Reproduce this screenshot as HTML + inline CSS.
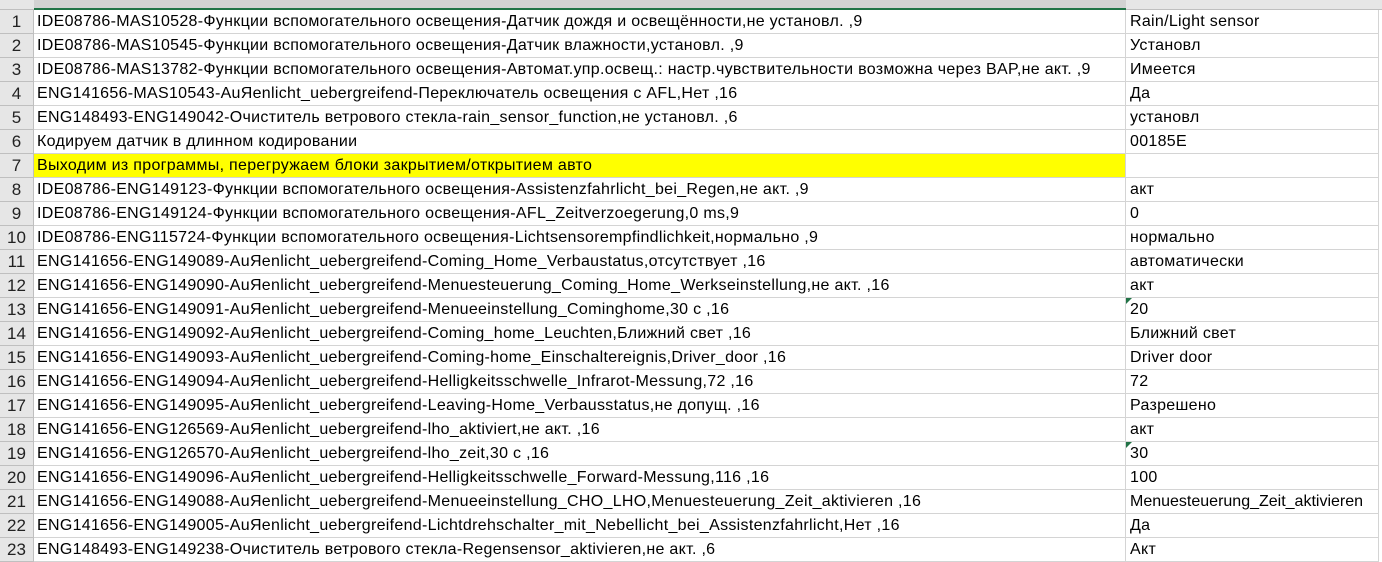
<!DOCTYPE html>
<html><head><meta charset="utf-8"><style>
body{margin:0;width:1382px;height:562px;overflow:hidden;background:#fff;font-family:"Liberation Sans",sans-serif;font-size:16px;letter-spacing:0.3px;color:#000}
.hdr{position:absolute;left:0;top:0;width:1382px;height:9px;background:#e6e6e6;border-bottom:1px solid #bfbfbf}
.hdrA{position:absolute;left:34px;top:0;width:1092px;height:8px;background:#d2d2d2;border-bottom:2px solid #217346}
.r{position:absolute;left:0;width:1382px;height:24px}
.n{position:absolute;left:0;top:0;width:33px;height:23px;background:#e6e6e6;border-right:1px solid #bfbfbf;border-bottom:1px solid #bfbfbf;text-align:center;line-height:24px;color:#222;font-size:17px;letter-spacing:0}
.a{position:absolute;left:34px;top:0;width:1092px;height:24px;box-sizing:border-box;border-bottom:1px solid #d4d4d4;border-right:1px solid #d4d4d4;line-height:24px;padding-left:3px;white-space:nowrap}
.b{position:absolute;left:1126px;top:0;width:253px;height:24px;box-sizing:border-box;border-bottom:1px solid #d4d4d4;border-right:1px solid #d4d4d4;line-height:24px;padding-left:4px;white-space:nowrap}
.y{background:#ffff00}
.t{position:absolute;left:1126px;top:0;width:0;height:0;border-top:6px solid #217346;border-right:6px solid transparent}
</style></head><body>
<div class="hdr"></div><div class="hdrA"></div>
<div class="r" style="top:10px"><div class="n">1</div><div class="a">IDE08786-MAS10528-Функции вспомогательного освещения-Датчик дождя и освещённости,не установл. ,9</div><div class="b">Rain/Light sensor</div></div>
<div class="r" style="top:34px"><div class="n">2</div><div class="a">IDE08786-MAS10545-Функции вспомогательного освещения-Датчик влажности,установл. ,9</div><div class="b">Установл</div></div>
<div class="r" style="top:58px"><div class="n">3</div><div class="a">IDE08786-MAS13782-Функции вспомогательного освещения-Автомат.упр.освещ.: настр.чувствительности возможна через BAP,не акт. ,9</div><div class="b">Имеется</div></div>
<div class="r" style="top:82px"><div class="n">4</div><div class="a">ENG141656-MAS10543-AuЯenlicht_uebergreifend-Переключатель освещения с AFL,Нет ,16</div><div class="b">Да</div></div>
<div class="r" style="top:106px"><div class="n">5</div><div class="a">ENG148493-ENG149042-Очиститель ветрового стекла-rain_sensor_function,не установл. ,6</div><div class="b">установл</div></div>
<div class="r" style="top:130px"><div class="n">6</div><div class="a">Кодируем датчик в длинном кодировании</div><div class="b">00185E</div></div>
<div class="r" style="top:154px"><div class="n">7</div><div class="a y">Выходим из программы, перегружаем блоки закрытием/открытием авто</div><div class="b"></div></div>
<div class="r" style="top:178px"><div class="n">8</div><div class="a">IDE08786-ENG149123-Функции вспомогательного освещения-Assistenzfahrlicht_bei_Regen,не акт. ,9</div><div class="b">акт</div></div>
<div class="r" style="top:202px"><div class="n">9</div><div class="a">IDE08786-ENG149124-Функции вспомогательного освещения-AFL_Zeitverzoegerung,0 ms,9</div><div class="b">0</div></div>
<div class="r" style="top:226px"><div class="n">10</div><div class="a">IDE08786-ENG115724-Функции вспомогательного освещения-Lichtsensorempfindlichkeit,нормально ,9</div><div class="b">нормально</div></div>
<div class="r" style="top:250px"><div class="n">11</div><div class="a">ENG141656-ENG149089-AuЯenlicht_uebergreifend-Coming_Home_Verbaustatus,отсутствует ,16</div><div class="b">автоматически</div></div>
<div class="r" style="top:274px"><div class="n">12</div><div class="a">ENG141656-ENG149090-AuЯenlicht_uebergreifend-Menuesteuerung_Coming_Home_Werkseinstellung,не акт. ,16</div><div class="b">акт</div></div>
<div class="r" style="top:298px"><div class="n">13</div><div class="a">ENG141656-ENG149091-AuЯenlicht_uebergreifend-Menueeinstellung_Cominghome,30 с ,16</div><div class="b">20</div><div class="t"></div></div>
<div class="r" style="top:322px"><div class="n">14</div><div class="a">ENG141656-ENG149092-AuЯenlicht_uebergreifend-Coming_home_Leuchten,Ближний свет ,16</div><div class="b">Ближний свет</div></div>
<div class="r" style="top:346px"><div class="n">15</div><div class="a">ENG141656-ENG149093-AuЯenlicht_uebergreifend-Coming-home_Einschaltereignis,Driver_door ,16</div><div class="b">Driver door</div></div>
<div class="r" style="top:370px"><div class="n">16</div><div class="a">ENG141656-ENG149094-AuЯenlicht_uebergreifend-Helligkeitsschwelle_Infrarot-Messung,72 ,16</div><div class="b">72</div></div>
<div class="r" style="top:394px"><div class="n">17</div><div class="a">ENG141656-ENG149095-AuЯenlicht_uebergreifend-Leaving-Home_Verbausstatus,не допущ. ,16</div><div class="b">Разрешено</div></div>
<div class="r" style="top:418px"><div class="n">18</div><div class="a">ENG141656-ENG126569-AuЯenlicht_uebergreifend-lho_aktiviert,не акт. ,16</div><div class="b">акт</div></div>
<div class="r" style="top:442px"><div class="n">19</div><div class="a">ENG141656-ENG126570-AuЯenlicht_uebergreifend-lho_zeit,30 с ,16</div><div class="b">30</div><div class="t"></div></div>
<div class="r" style="top:466px"><div class="n">20</div><div class="a">ENG141656-ENG149096-AuЯenlicht_uebergreifend-Helligkeitsschwelle_Forward-Messung,116 ,16</div><div class="b">100</div></div>
<div class="r" style="top:490px"><div class="n">21</div><div class="a">ENG141656-ENG149088-AuЯenlicht_uebergreifend-Menueeinstellung_CHO_LHO,Menuesteuerung_Zeit_aktivieren ,16</div><div class="b" style="letter-spacing:0">Menuesteuerung_Zeit_aktivieren</div></div>
<div class="r" style="top:514px"><div class="n">22</div><div class="a">ENG141656-ENG149005-AuЯenlicht_uebergreifend-Lichtdrehschalter_mit_Nebellicht_bei_Assistenzfahrlicht,Нет ,16</div><div class="b">Да</div></div>
<div class="r" style="top:538px"><div class="n">23</div><div class="a">ENG148493-ENG149238-Очиститель ветрового стекла-Regensensor_aktivieren,не акт. ,6</div><div class="b">Акт</div></div>
</body></html>
